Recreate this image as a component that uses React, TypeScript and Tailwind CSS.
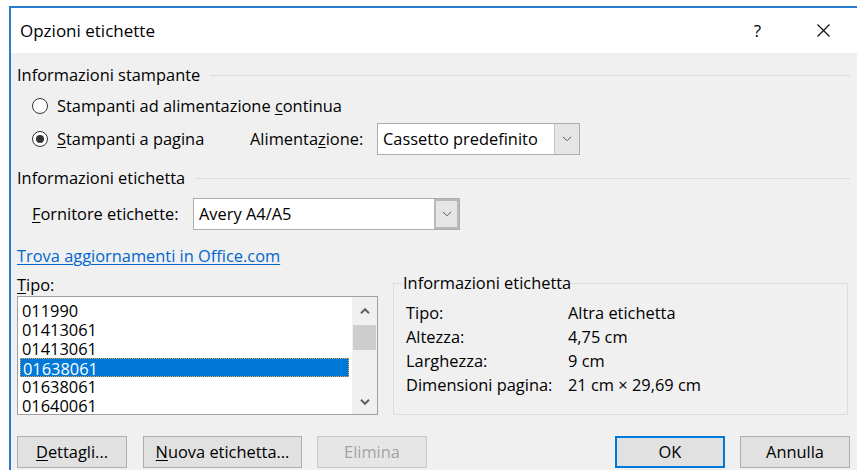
import { ReactNode } from "react";

const items = ["011990", "01413061", "01413061", "01638061", "01638061", "01640061"];
const selectedIndex = 3;

const details: [string, string][] = [
    ["Tipo:", "Altra etichetta"],
    ["Altezza:", "4,75 cm"],
    ["Larghezza:", "9 cm"],
    ["Dimensioni pagina:", "21 cm × 29,69 cm"],
];

function Key({ children }: { children: ReactNode }) {
    return <u className="underline underline-offset-2 decoration-1">{children}</u>;
}

function GroupHeader({ label }: { label: string }) {
    return (
        <div className="flex h-[20px] items-center">
            <span className="leading-[20px]">{label}</span>
            <div className="ml-[10px] h-px flex-1 bg-[#dcdcdc]" />
        </div>
    );
}

function Radio({ checked }: { checked?: boolean }) {
    return (
        <span className="flex h-[16px] w-[16px] shrink-0 items-center justify-center rounded-full border border-[#333] bg-white">
            {checked && <span className="h-[8px] w-[8px] rounded-full bg-[#333]" />}
        </span>
    );
}

function Chevron({ up, bold }: { up?: boolean; bold?: boolean }) {
    return (
        <svg width="10" height="6" viewBox="0 0 10 6" className={bold ? "text-[#606060]" : "text-[#555]"}>
            <path
                d={up ? "M1 5.2 L5 1.2 L9 5.2" : "M1 0.8 L5 4.8 L9 0.8"}
                fill="none"
                stroke="currentColor"
                strokeWidth={bold ? 2 : 1}
            />
        </svg>
    );
}

function Dropdown({ value, width, dark }: { value: string; width: string; dark?: boolean }) {
    return (
        <div className={`flex h-[32px] border border-[#adadad] bg-white ${width}`}>
            <span className="flex-1 pl-[5px] leading-[30px]">{value}</span>
            <span
                className={`flex w-[25px] items-center justify-center bg-[#e5e5e5] ${
                    dark ? "border-2 border-[#b9b9b9]" : "border-l border-[#c4c4c4]"
                }`}
            >
                <Chevron />
            </span>
        </div>
    );
}

function Button({ children, width, primary, disabled }: { children: ReactNode; width: string; primary?: boolean; disabled?: boolean }) {
    return (
        <button
            className={`h-[32px] ${width} ${
                primary
                    ? "border-2 border-[#0078d7] bg-[#e1e1e1] text-black"
                    : disabled
                    ? "border border-[#c8c8c8] bg-[#e6e6e6] text-[#a3a3a3]"
                    : "border border-[#adadad] bg-[#e1e1e1] text-black"
            }`}
        >
            {children}
        </button>
    );
}

export default function App() {
    return (
        <div className="h-[470px] w-[857px] overflow-hidden bg-white pl-[9px] pt-[6px] text-[16.4px] text-black font-['Open_Sans',sans-serif]">
            <div className="flex h-[500px] w-[848px] flex-col border-l-2 border-t-2 border-[#2a7bd0]">
                {/* title bar */}
                <div className="flex h-[45px] shrink-0 items-center bg-white pl-[9px] pr-[27px]">
                    <span className="text-[17px]">Opzioni etichette</span>
                    <span className="ml-auto mr-[56px] text-[17px]">?</span>
                    <svg width="13" height="13" viewBox="0 0 13 13">
                        <path d="M0.5 0.5 L12.5 12.5 M12.5 0.5 L0.5 12.5" stroke="#111" strokeWidth="1.2" />
                    </svg>
                </div>

                <div className="flex flex-1 flex-col bg-[#f0f0f0] pl-[6px] pr-[7px]">
                    <div className="mt-[12px]">
                        <GroupHeader label="Informazioni stampante" />
                    </div>

                    <div className="mt-[11px] flex h-[20px] items-center pl-[15px]">
                        <Radio />
                        <span className="ml-[9px]">
                            Stampanti ad alimentazione <Key>c</Key>ontinua
                        </span>
                    </div>

                    <div className="mt-[7px] flex h-[32px] items-center pl-[15px]">
                        <Radio checked />
                        <span className="ml-[9px] w-[193px]">
                            <Key>S</Key>tampanti a pagina
                        </span>
                        <span className="w-[127px]">
                            Alimenta<Key>z</Key>ione:
                        </span>
                        <Dropdown value="Cassetto predefinito" width="w-[203px]" />
                    </div>

                    <div className="mt-[13px]">
                        <GroupHeader label="Informazioni etichetta" />
                    </div>

                    <div className="mt-[10px] flex h-[32px] items-center pl-[15px]">
                        <span className="w-[161px]">
                            <Key>F</Key>ornitore etichette:
                        </span>
                        <Dropdown value="Avery A4/A5" width="w-[267px]" dark />
                    </div>

                    <div className="mt-[16px] h-[20px] leading-[20px]">
                        <a className="text-[#0066cc] underline underline-offset-2 decoration-1">Trova aggiornamenti in Office.com</a>
                    </div>

                    <div className="mt-[7px] flex">
                        <div className="w-[361px]">
                            <div className="mt-[2px] h-[20px] leading-[20px]">
                                <Key>T</Key>ipo:
                            </div>
                            <div className="mt-[1px] flex h-[119px] overflow-hidden border border-[#a0a0a0] bg-white">
                                <div className="flex-1 pl-[2px] pt-[4px]">
                                    {items.map((item, i) => (
                                        <div
                                            key={i}
                                            className={`h-[19px] pl-[2px] leading-[19px] ${
                                                i === selectedIndex
                                                    ? "border border-dotted border-[#f0a040] bg-[#0078d7] pl-[1px] leading-[17px] text-white"
                                                    : ""
                                            }`}
                                        >
                                            {item}
                                        </div>
                                    ))}
                                </div>
                                <div className="ml-[3px] flex w-[25px] flex-col bg-[#f0f0f0]">
                                    <div className="flex h-[28px] items-center justify-center">
                                        <Chevron up bold />
                                    </div>
                                    <div className="mx-[1px] h-[25px] bg-[#cdcdcd]" />
                                    <div className="flex-1" />
                                    <div className="flex h-[24px] items-center justify-center">
                                        <Chevron bold />
                                    </div>
                                </div>
                            </div>
                        </div>

                        <fieldset className="ml-[15px] h-[142px] w-[455px] border border-[#dcdcdc] pl-[12px]">
                            <legend className="ml-[-4px] px-[1px] leading-[20px]">Informazioni etichetta</legend>
                            <div className="mt-[8px] flex flex-col">
                                {details.map(([k, v]) => (
                                    <div key={k} className="flex h-[24px] items-center">
                                        <span className="w-[162px]">{k}</span>
                                        <span>{v}</span>
                                    </div>
                                ))}
                            </div>
                        </fieldset>
                    </div>

                    <div className="mt-[21px] flex">
                        <Button width="w-[110px]">
                            <Key>D</Key>ettagli...
                        </Button>
                        <div className="ml-[16px]">
                            <Button width="w-[159px]">
                                <Key>N</Key>uova etichetta...
                            </Button>
                        </div>
                        <div className="ml-[15px]">
                            <Button width="w-[110px]" disabled>
                                Elimina
                            </Button>
                        </div>
                        <div className="ml-auto flex gap-[15px]">
                            <Button width="w-[110px]" primary>
                                OK
                            </Button>
                            <Button width="w-[110px]">Annulla</Button>
                        </div>
                    </div>
                </div>
            </div>
        </div>
    );
}
